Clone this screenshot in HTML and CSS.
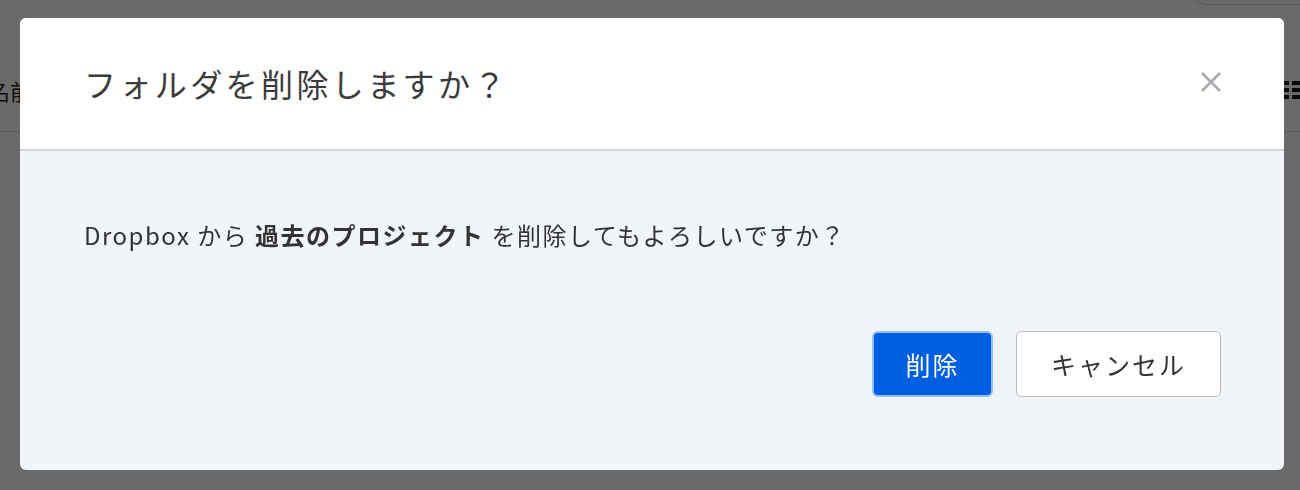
FILE: index.html
```html
<!DOCTYPE html>
<html lang="ja">
<head>
    <meta charset="UTF-8">
    <meta name="viewport" content="width=device-width, initial-scale=1.0">
    <title>フォルダを削除</title>
    <link rel="stylesheet" href="styles.css">
</head>
<body>
    <div class="page">
        <div class="search"></div>
        <div class="list-header">
            <span class="col-name">名前</span>
            <svg class="view-icon" width="28" height="20" viewBox="0 0 28 20" fill="#1e1919">
                <rect x="0" y="1" width="5" height="4"></rect>
                <rect x="8" y="1" width="20" height="4"></rect>
                <rect x="0" y="8" width="5" height="4"></rect>
                <rect x="8" y="8" width="20" height="4"></rect>
                <rect x="0" y="15" width="5" height="4"></rect>
                <rect x="8" y="15" width="20" height="4"></rect>
            </svg>
        </div>
    </div>

    <div class="overlay">
        <div class="modal">
            <div class="modal-header">
                <h1 class="modal-title">フォルダを削除しますか？</h1>
                <button class="close-btn" type="button" aria-label="閉じる">
                    <svg width="22" height="22" viewBox="0 0 22 22" fill="none" stroke="currentColor" stroke-width="2.6">
                        <path d="M2 2L20 20"></path>
                        <path d="M20 2L2 20"></path>
                    </svg>
                </button>
            </div>
            <div class="modal-body">
                <p class="message">Dropbox から <b>過去のプロジェクト</b> を削除してもよろしいですか？</p>
                <div class="actions">
                    <button class="btn btn-primary" type="button">削除</button>
                    <button class="btn btn-secondary" type="button">キャンセル</button>
                </div>
            </div>
        </div>
    </div>
</body>
</html>
```
FILE: styles.css
```css
body {
    font-family: "Noto Sans", "Noto Sans CJK JP", sans-serif;
    margin: 0;
    color: #333;
    background: #fff;
    overflow: hidden;
}
.page {
    width: 1300px;
    height: 490px;
    display: flex;
    flex-direction: column;
}
.search {
    align-self: flex-end;
    margin-top: -40px;
    margin-right: -100px;
    width: 214px;
    height: 45px;
    box-sizing: border-box;
    border: 1px solid #cfcfcf;
    border-radius: 22px;
}
.list-header {
    display: flex;
    align-items: center;
    justify-content: space-between;
    height: 127px;
    box-sizing: border-box;
    padding-top: 44px;
    border-bottom: 1px solid #dcdcdc;
}
.col-name {
    margin-left: -12px;
    font-size: 22px;
    color: #1e1919;
}
.view-icon {
    margin-right: -12px;
}
.overlay {
    position: fixed;
    inset: 0;
    background: rgba(0, 0, 0, 0.585);
    display: flex;
    padding: 18px 16px 20px 20px;
}
.modal {
    width: 1264px;
    height: 452px;
    border-radius: 6px;
    overflow: hidden;
    display: flex;
    flex-direction: column;
    background: #f1f5fa;
}
.modal-header {
    height: 133px;
    flex-shrink: 0;
    box-sizing: border-box;
    background: #fff;
    border-bottom: 2px solid #cfd2d6;
    display: flex;
    align-items: center;
    justify-content: space-between;
    padding: 0 62px 1px 64px;
}
.modal-title {
    margin: 0;
    font-family: "Noto Sans CJK JP", sans-serif;
    font-size: 32px;
    font-weight: 400;
    letter-spacing: 3.4px;
    color: #3b3b3b;
}
.close-btn {
    background: none;
    border: none;
    padding: 0;
    margin-bottom: 2px;
    color: #a7abb0;
    display: flex;
    cursor: pointer;
}
.modal-body {
    flex: 1;
    display: flex;
    flex-direction: column;
    padding: 68px 63px 73px 64px;
}
.message {
    margin: 0;
    font-family: "Noto Sans CJK JP", sans-serif;
    font-size: 24px;
    line-height: 32px;
    letter-spacing: 1.5px;
    color: #333;
}
.message b {
    font-weight: 700;
}
.actions {
    margin-top: auto;
    display: flex;
    justify-content: flex-end;
    gap: 23px;
}
.btn {
    height: 66px;
    box-sizing: border-box;
    border-radius: 5px;
    font-family: "Noto Sans CJK JP", sans-serif;
    font-size: 25px;
    letter-spacing: 2px;
    cursor: pointer;
}
.btn-primary {
    width: 121px;
    background: #005ee0;
    color: #fff;
    border: 2px solid #8fc0f7;
    border-radius: 6px;
}
.btn-secondary {
    width: 205px;
    background: #fff;
    color: #333;
    border: 1px solid #b9b9b9;
}
```
